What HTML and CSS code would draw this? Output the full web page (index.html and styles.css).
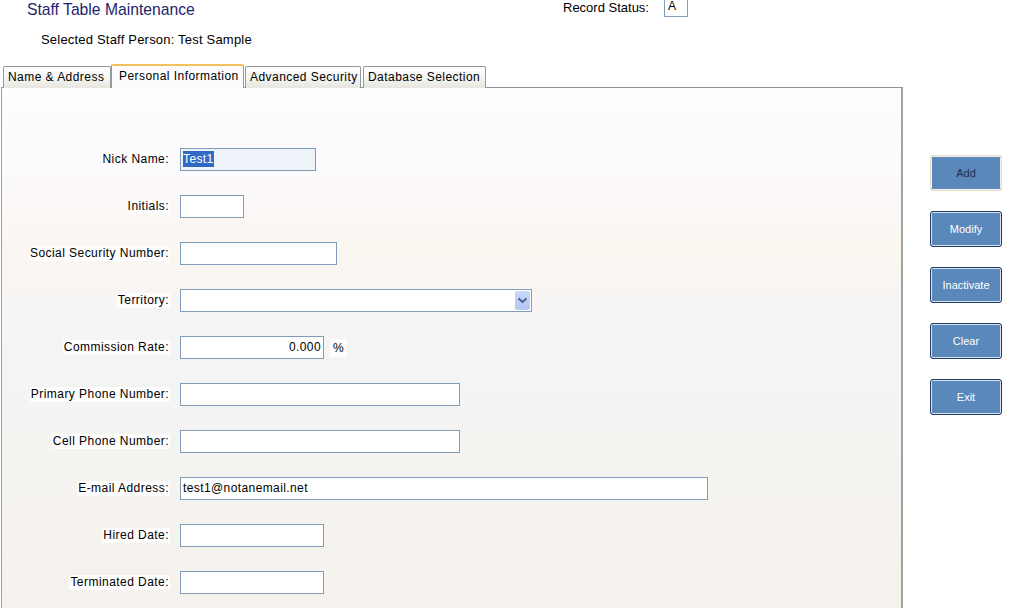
FILE: index.html
```html
<!DOCTYPE html>
<html>
<head>
<meta charset="utf-8">
<title>Staff Table Maintenance</title>
<link rel="stylesheet" href="styles.css">
</head>
<body>
<div class="header">
  <div class="title">Staff Table Maintenance</div>
  <div class="status">
    <span class="status-label">Record Status:</span>
    <span class="status-box">A</span>
  </div>
</div>
<div class="subtitle">Selected Staff Person: Test Sample</div>
<div class="main">
  <div class="tabs-area">
    <div class="tabbar">
      <div class="tab t1">Name &amp; Address</div>
      <div class="tab active t2">Personal Information</div>
      <div class="tab t3">Advanced Security</div>
      <div class="tab t4">Database Selection</div>
    </div>
    <div class="panel">
      <div class="row"><span class="lbl">Nick Name:</span><span class="field w136 nick"><span class="sel">Test1</span></span></div>
      <div class="row"><span class="lbl">Initials:</span><span class="field w64"></span></div>
      <div class="row"><span class="lbl">Social Security Number:</span><span class="field w157"></span></div>
      <div class="row"><span class="lbl">Territory:</span><span class="field w352 select"><span class="arrow"><svg width="15" height="18" viewBox="0 0 15 18"><path d="M3.5 7.5 L7.5 11 L11.5 7.5" fill="none" stroke="#4a5f8c" stroke-width="2"/></svg></span></span></div>
      <div class="row"><span class="lbl">Commission Rate:</span><span class="inline"><span class="field w144 right">0.000</span><span class="pct">%</span></span></div>
      <div class="row"><span class="lbl">Primary Phone Number:</span><span class="field w280"></span></div>
      <div class="row"><span class="lbl">Cell Phone Number:</span><span class="field w280"></span></div>
      <div class="row"><span class="lbl">E-mail Address:</span><span class="field w528">test1@notanemail.net</span></div>
      <div class="row"><span class="lbl">Hired Date:</span><span class="field w144"></span></div>
      <div class="row"><span class="lbl">Terminated Date:</span><span class="field w144"></span></div>
    </div>
  </div>
  <div class="buttons">
    <div class="btn default">Add</div>
    <div class="btn">Modify</div>
    <div class="btn">Inactivate</div>
    <div class="btn">Clear</div>
    <div class="btn">Exit</div>
  </div>
</div>
</body>
</html>
```
FILE: styles.css
```css
html, body {
  margin: 0;
  padding: 0;
}
body {
  font-family: "Liberation Sans", Arial, sans-serif;
  background: #ffffff;
  color: #000;
  width: 1011px;
  height: 609px;
  overflow: hidden;
}
.header {
  display: flex;
  height: 20px;
}
.title {
  box-sizing: border-box;
  width: 563px;
  padding-left: 27px;
  font-size: 15.7px;
  line-height: 20px;
  color: #23246c;
}
.status {
  display: flex;
  align-items: flex-start;
}
.status-label {
  font-size: 13px;
  line-height: 16px;
}
.status-box {
  box-sizing: border-box;
  margin-left: 15px;
  width: 24px;
  height: 17px;
  border: 1px solid #7f9db9;
  border-top: none;
  font-size: 12px;
  line-height: 12px;
  padding-left: 3px;
  background: #fff;
}
.subtitle {
  margin-top: 12px;
  padding-left: 41px;
  font-size: 13px;
  line-height: 16px;
  letter-spacing: 0.2px;
}
.main {
  display: flex;
  margin-top: 17px;
}
.tabs-area {
  margin-left: 1px;
  width: 902px;
}
.tabbar {
  display: flex;
  align-items: flex-end;
  height: 23px;
  padding-left: 2px;
  position: relative;
  z-index: 1;
  margin-bottom: -1px;
}
.tab {
  box-sizing: border-box;
  height: 22px;
  padding: 0 4px;
  font-size: 12px;
  letter-spacing: 0.45px;
  line-height: 21px;
  border: 1px solid #919b9c;
  border-bottom: none;
  background: linear-gradient(#ffffff, #f3f3ef 60%, #e6e5df);
  border-radius: 2px 2px 0 0;
  white-space: nowrap;
}
.t1 { width: 108px; }
.t2 { width: 133px; }
.t3 { width: 116px; margin-left: 1px; }
.t4 { width: 123px; margin-left: 2px; }
.tab.active {
  height: 24px;
  border-top: 2px solid #f2c25a;
  background: #fcfcfe;
  line-height: 20px;
  padding-left: 7px;
}
.panel {
  box-sizing: border-box;
  height: 521px;
  border-top: 1px solid #8e9396;
  border-left: 1px solid #9ca3a8;
  border-right: 2px solid #a3a3a0;
  padding-top: 48px;
  overflow: hidden;
  background: linear-gradient(#fefcfe 0px, #fcf9fc 90px, #fbf6f0 160px, #f7f5f4 215px, #f4f4f4 280px, #f5f3ef 400px, #f5f2ee 521px);
}
.row {
  display: grid;
  grid-template-columns: 168px auto;
  column-gap: 10px;
  height: 47px;
  align-items: center;
  justify-items: start;
}
.lbl {
  justify-self: end;
  font-size: 12px;
  letter-spacing: 0.45px;
  line-height: 15px;
  padding: 0 1px;
  background: #fdfdfd;
}
.field {
  box-sizing: border-box;
  height: 23px;
  border: 1px solid #7f9db9;
  background: #fff;
  font-size: 12px;
  letter-spacing: 0.4px;
  line-height: 21px;
  padding: 0 2px;
  display: block;
}
.w64 { width: 64px; }
.w136 { width: 136px; }
.w144 { width: 144px; }
.w157 { width: 157px; }
.w280 { width: 280px; }
.w352 { width: 352px; }
.w528 { width: 528px; }
.nick {
  background: #eef3fa;
}
.sel {
  background: #316ac5;
  color: #fff;
  padding: 1px 0;
}
.right {
  text-align: right;
}
.inline {
  display: flex;
  align-items: center;
}
.pct {
  margin-left: 6px;
  font-size: 12px;
  padding: 2px 3px;
  background: #fdfdfd;
}
.select {
  display: flex;
  justify-content: flex-end;
  align-items: center;
  padding: 1px;
}
.arrow {
  display: block;
  width: 15px;
  height: 19px;
  background: linear-gradient(#c9d8fb, #b3c7f3);
  border-radius: 2px;
}
.arrow svg {
  display: block;
}
.buttons {
  display: flex;
  flex-direction: column;
  gap: 20px;
  margin-left: 27px;
  padding-top: 90px;
}
.btn {
  box-sizing: border-box;
  width: 72px;
  height: 36px;
  border: 1px solid #1f3c66;
  border-radius: 3px;
  box-shadow: inset 0 0 0 1px #dbe4ef;
  background: #5b88ba;
  color: #fff;
  font-size: 11px;
  display: flex;
  align-items: center;
  justify-content: center;
}
.btn.default {
  border-color: #e9dfcf;
  box-shadow: inset 0 0 0 1px #f4efe8;
  color: #1b2c55;
}
```
